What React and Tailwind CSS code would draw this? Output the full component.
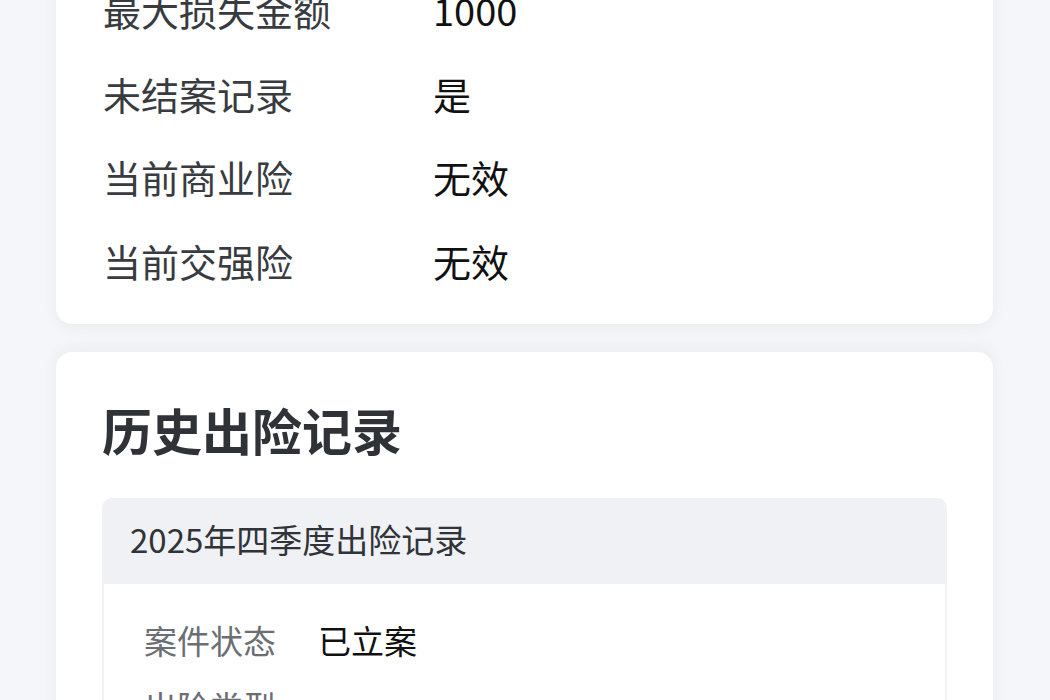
const summary = [
  { label: "最大损失金额", value: "1000" },
  { label: "未结案记录", value: "是" },
  { label: "当前商业险", value: "无效" },
  { label: "当前交强险", value: "无效" },
];

const claimRows = [
  { label: "案件状态", value: "已立案" },
  { label: "出险类型", value: "" },
];

const font = { fontFamily: '"Noto Sans CJK SC", "Noto Sans", sans-serif' };

export default function App() {
  return (
    <div
      className="h-[700px] overflow-hidden bg-[#f5f6f9] pl-[56px] pr-[57px]"
      style={font}
    >
      {/* summary card, scrolled so its top is off screen */}
      <div className="-mt-[32px] rounded-b-[16px] bg-white px-[47px] pb-[22px] shadow-[0_4px_14px_rgba(30,40,70,0.05)]">
        {summary.map((r) => (
          <div key={r.label} className="flex h-[83.5px] items-center text-[38px]">
            <span className="w-[330px] text-[#383b40]">{r.label}</span>
            <span className="text-[#111]">{r.value}</span>
          </div>
        ))}
      </div>

      {/* history card */}
      <div className="mt-[28px] rounded-t-[16px] bg-white px-[46px] pb-10 pt-[48px] shadow-[0_-4px_14px_rgba(30,40,70,0.05)]">
        <h2 className="mb-[40px] text-[50px] font-bold leading-[58px] text-[#2f3237]">
          历史出险记录
        </h2>

        <div className="overflow-hidden rounded-[10px] border-2 border-[#eff1f4]">
          <div className="flex h-[84px] items-center bg-[#eff1f4] px-[26px] pb-[4px] text-[33px] text-[#303338]">
            2025年四季度出险记录
          </div>
          <div className="px-[40px] pt-[24px]">
            {claimRows.map((r) => (
              <div key={r.label} className="flex h-[66px] items-center text-[33px]">
                <span className="w-[174px] text-[#6b6e73]">{r.label}</span>
                <span className="text-[#111]">{r.value}</span>
              </div>
            ))}
          </div>
        </div>
      </div>
    </div>
  );
}
